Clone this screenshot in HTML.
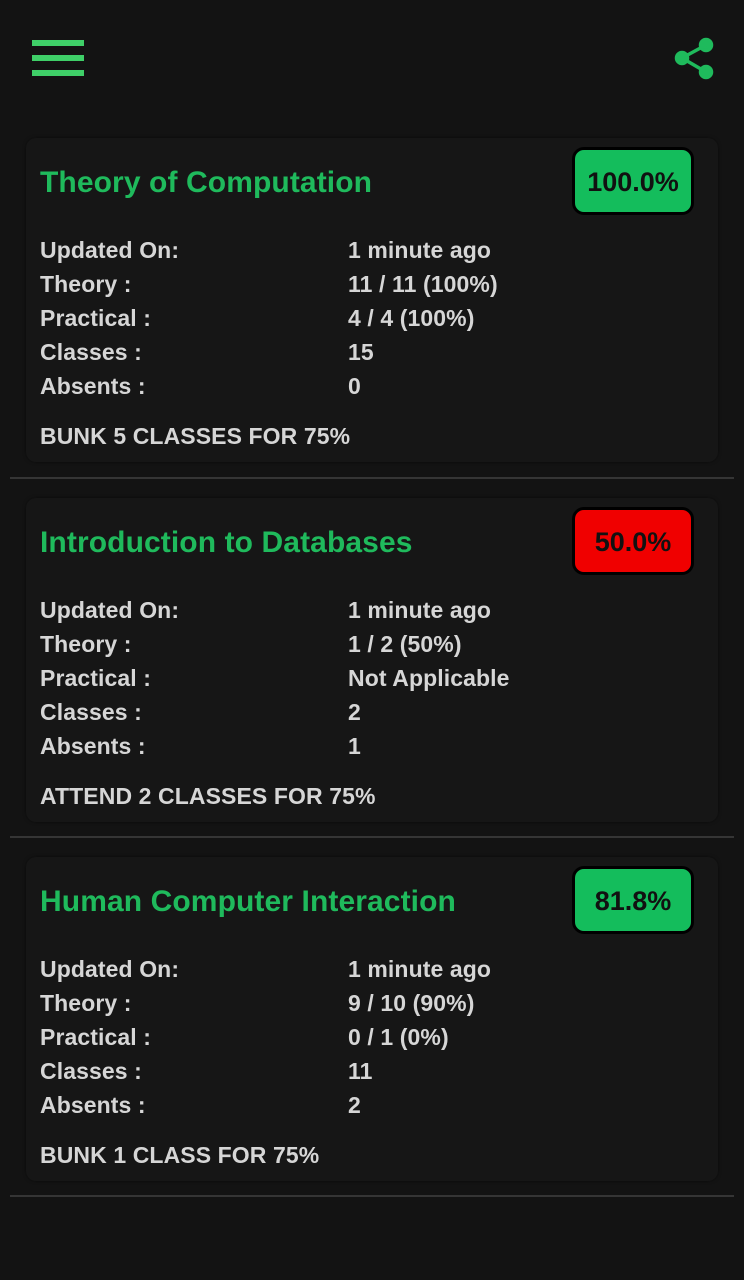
<!DOCTYPE html>
<html><head><meta charset="utf-8"><style>
*{margin:0;padding:0;box-sizing:border-box}
body{width:744px;height:1280px;background:#131313;font-family:"Liberation Sans",sans-serif;position:relative;overflow:hidden}
.card{position:absolute;left:26px;width:692px;height:324px;background:#161616;border-radius:10px;box-shadow:0 0 3px rgba(0,0,0,.5)}
.title{position:absolute;left:14px;top:28px;font-size:30px;font-weight:bold;color:#1fba5c;letter-spacing:0.1px;white-space:nowrap}
.badge{position:absolute;left:546px;top:9px;width:122px;height:68px;border:3px solid #000;border-radius:12px;font-size:27px;font-weight:bold;color:#111;display:flex;align-items:center;justify-content:center;padding-top:2px}
.g{background:#14bd5c}.r{background:#f00000}
.row{position:absolute;left:14px;font-size:23px;font-weight:bold;color:#d6d6d6;white-space:nowrap;letter-spacing:0.1px}
.v{left:322px}
.div{position:absolute;left:10px;width:724px;height:2px;background:#353535}
</style></head><body>
<div style="position:absolute;left:32px;top:40px;width:52px;height:6px;background:#3fcf68"></div>
<div style="position:absolute;left:32px;top:55px;width:52px;height:6px;background:#3fcf68"></div>
<div style="position:absolute;left:32px;top:70px;width:52px;height:6px;background:#3fcf68"></div>
<svg style="position:absolute;left:672px;top:36px" width="44" height="44" viewBox="0 0 44 44"><g fill="#1fba5c" stroke="#1fba5c" stroke-width="3.5"><circle cx="34" cy="9" r="5.5"/><circle cx="10" cy="22" r="5.5"/><circle cx="34" cy="36" r="5.5"/><line x1="34" y1="9" x2="10" y2="22"/><line x1="10" y1="22" x2="34" y2="36"/></g></svg>

<div class="card" style="top:138px">
<div class="title">Theory of Computation</div>
<div class="badge g">100.0%</div>
<div class="row" style="top:99px">Updated On:</div><div class="row v" style="top:99px">1 minute ago</div>
<div class="row" style="top:133px">Theory :</div><div class="row v" style="top:133px">11 / 11 (100%)</div>
<div class="row" style="top:167px">Practical :</div><div class="row v" style="top:167px">4 / 4 (100%)</div>
<div class="row" style="top:201px">Classes :</div><div class="row v" style="top:201px">15</div>
<div class="row" style="top:235px">Absents :</div><div class="row v" style="top:235px">0</div>
<div class="row" style="top:285px">BUNK 5 CLASSES FOR 75%</div>
</div>
<div class="div" style="top:477px"></div>

<div class="card" style="top:498px">
<div class="title">Introduction to Databases</div>
<div class="badge r">50.0%</div>
<div class="row" style="top:99px">Updated On:</div><div class="row v" style="top:99px">1 minute ago</div>
<div class="row" style="top:133px">Theory :</div><div class="row v" style="top:133px">1 / 2 (50%)</div>
<div class="row" style="top:167px">Practical :</div><div class="row v" style="top:167px">Not Applicable</div>
<div class="row" style="top:201px">Classes :</div><div class="row v" style="top:201px">2</div>
<div class="row" style="top:235px">Absents :</div><div class="row v" style="top:235px">1</div>
<div class="row" style="top:285px">ATTEND 2 CLASSES FOR 75%</div>
</div>
<div class="div" style="top:836px"></div>

<div class="card" style="top:857px">
<div class="title">Human Computer Interaction</div>
<div class="badge g">81.8%</div>
<div class="row" style="top:99px">Updated On:</div><div class="row v" style="top:99px">1 minute ago</div>
<div class="row" style="top:133px">Theory :</div><div class="row v" style="top:133px">9 / 10 (90%)</div>
<div class="row" style="top:167px">Practical :</div><div class="row v" style="top:167px">0 / 1 (0%)</div>
<div class="row" style="top:201px">Classes :</div><div class="row v" style="top:201px">11</div>
<div class="row" style="top:235px">Absents :</div><div class="row v" style="top:235px">2</div>
<div class="row" style="top:285px">BUNK 1 CLASS FOR 75%</div>
</div>
<div class="div" style="top:1195px"></div>
</body></html>
